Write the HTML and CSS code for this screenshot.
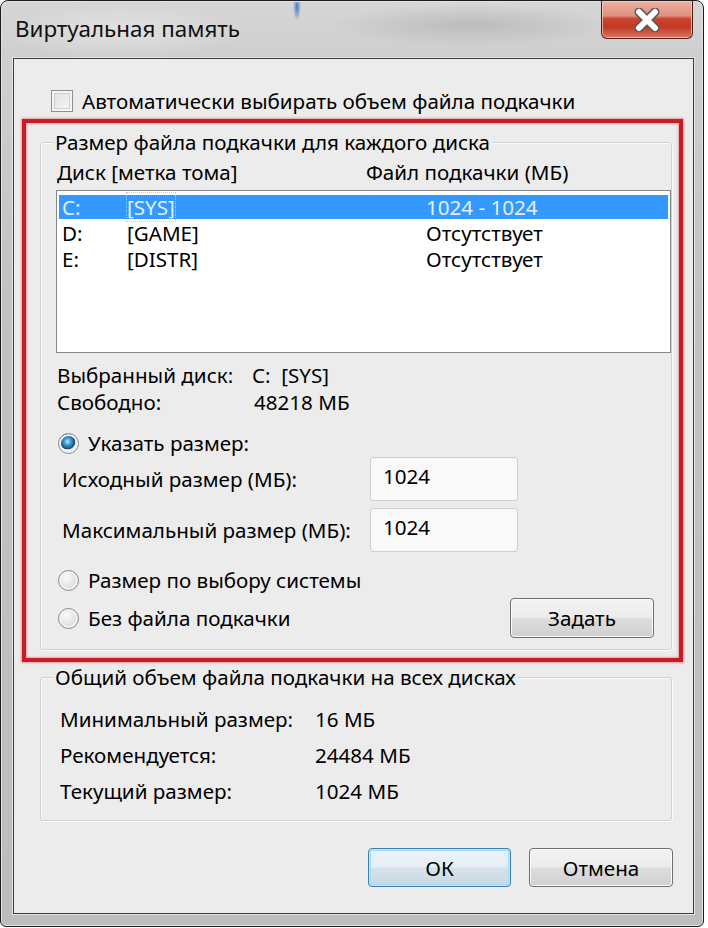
FILE: index.html
```html
<!DOCTYPE html>
<html lang="ru">
<head>
<meta charset="utf-8">
<title>Виртуальная память</title>
<link rel="stylesheet" href="styles.css">
</head>
<body>
<div class="window">
  <div class="titlebar">
    <span class="title">Виртуальная память</span>
    <div class="close">
      <svg width="30" height="24" viewBox="0 0 30 24">
        <path d="M7 4 L23 20 M23 4 L7 20" stroke="#5a5a5a" stroke-width="9" stroke-linecap="round"/>
        <path d="M7 4 L23 20 M23 4 L7 20" stroke="#ffffff" stroke-width="6" stroke-linecap="round"/>
      </svg>
    </div>
  </div>
  <div class="client">
    <div class="auto"><span class="checkbox"></span><span>Автоматически выбирать объем файла подкачки</span></div>
    <div class="highlight">
      <div class="group g1">
        <span class="group-title">Размер файла подкачки для каждого диска</span>
        <div class="cols"><span class="col-a">Диск [метка тома]</span><span>Файл подкачки (МБ)</span></div>
        <div class="listbox">
          <div class="row sel"><span class="c1">C:</span><span class="c2"><span class="focus">[SYS]</span></span><span>1024 - 1024</span></div>
          <div class="row"><span class="c1">D:</span><span class="c2">[GAME]</span><span>Отсутствует</span></div>
          <div class="row"><span class="c1">E:</span><span class="c2">[DISTR]</span><span>Отсутствует</span></div>
        </div>
        <div class="info">
          <span>Выбранный диск:</span><span>C:&nbsp;&nbsp;[SYS]</span>
          <span>Свободно:</span><span class="free">48218 МБ</span>
        </div>
        <div class="radio-row r1"><span class="radio on"></span><span>Указать размер:</span></div>
        <div class="field f1"><span class="field-label">Исходный размер (МБ):</span><span class="input">1024</span></div>
        <div class="field f2"><span class="field-label">Максимальный размер (МБ):</span><span class="input">1024</span></div>
        <div class="radio-row r2"><span class="radio"></span><span>Размер по выбору системы</span></div>
        <div class="last-row">
          <div class="radio-row"><span class="radio"></span><span>Без файла подкачки</span></div>
          <span class="btn set">Задать</span>
        </div>
      </div>
    </div>
    <div class="group g2">
      <span class="group-title">Общий объем файла подкачки на всех дисках</span>
      <div class="totals">
        <span>Минимальный размер:</span><span>16 МБ</span>
        <span>Рекомендуется:</span><span>24484 МБ</span>
        <span>Текущий размер:</span><span>1024 МБ</span>
      </div>
    </div>
    <div class="buttons">
      <span class="btn ok">ОК</span>
      <span class="btn cancel">Отмена</span>
    </div>
  </div>
</div>
</body>
</html>
```
FILE: styles.css
```css
* { box-sizing: border-box; }
html, body { margin: 0; padding: 0; background: #ffffff; }
body {
  font-family: "Noto Sans", "Open Sans", "DejaVu Sans", sans-serif;
  font-size: 20.6px;
  color: #000;
}

.window {
  width: 704px;
  height: 927px;
  border: 1px solid #1c1c1c;
  border-radius: 8px 8px 6px 6px;
  background:
    radial-gradient(ellipse 4px 14px at 296px 6px, rgba(60,110,190,0.9), rgba(60,110,190,0) 100%),
    radial-gradient(ellipse 180px 40px at 120px 30px, rgba(255,255,255,0.35), rgba(255,255,255,0) 70%),
    radial-gradient(ellipse 200px 30px at 470px 24px, rgba(120,120,120,0.25), rgba(120,120,120,0) 70%),
    linear-gradient(180deg, #d6d6d6 0, #cfcfcf 50px, #c2c2c2 300px, #bdbdbd 100%);
  box-shadow: inset 0 0 0 1px #e2e2e2;
  padding: 0 9px 12px 12px;
  display: flex;
  flex-direction: column;
}

.titlebar {
  height: 57px;
  display: flex;
  justify-content: space-between;
  align-items: flex-start;
}
.title {
  font-size: 22.4px;
  line-height: 28px;
  padding: 14px 0 0 2px;
  color: #111;
}
.close {
  width: 92px;
  height: 38px;
  margin-right: 1px;
  border: 1px solid #4a1e18;
  border-top: none;
  border-radius: 0 0 6px 6px;
  background: linear-gradient(180deg, #ecb1a4 0%, #e0907e 40%, #c9442e 48%, #c13a24 70%, #dc7560 100%);
  box-shadow: inset 0 0 0 1px rgba(255,210,200,0.7);
  display: flex;
  align-items: center;
  justify-content: center;
}

.client {
  height: 856px;
  border: 1px solid #3c3c3c;
  background: #ececec;
  box-shadow: 0 0 0 1px #e6e6e6;
  display: flex;
  flex-direction: column;
}

.auto {
  margin-top: 30px;
  height: 24px;
  padding-left: 37px;
  display: flex;
  align-items: center;
  line-height: 24px;
}
.checkbox {
  width: 22px;
  height: 22px;
  margin-right: 9px;
  border: 1px solid #8e8f8f;
  background: linear-gradient(135deg, #dedede, #f8f8f8);
  box-shadow: inset 0 0 0 2px #f4f4f4, inset 0 0 0 3px #cfcfcf;
}

.highlight {
  margin: 6px 10px 0 8px;
  border: 4px solid #c61c2a;
  box-shadow: 0 0 2px 1px rgba(240,120,120,0.7), inset 0 0 2px 1px rgba(240,130,130,0.7);
  padding: 19px 7px 8px 14px;
}

.group {
  border: 1px solid #cdd2d6;
  border-radius: 3px;
  box-shadow: inset 1px 1px 0 #fafafa, 1px 1px 0 #fafafa;
}
.group-title {
  display: block;
  width: max-content;
  margin: -12px 0 0 12px;
  padding: 0 2px;
  background: #ececec;
  line-height: 22px;
}

.g1 { padding: 0 0 11px 0; }

.cols {
  display: flex;
  margin-top: 7px;
  padding-left: 16px;
  line-height: 24px;
}
.col-a { width: 309px; }

.listbox {
  margin: 6px 0 0 15px;
  height: 163px;
  border: 1px solid #828790;
  background: #ffffff;
  padding: 4px 2px 0 2px;
}
.row {
  display: flex;
  height: 24px;
  line-height: 24px;
  margin-bottom: 2px;
  padding-left: 3px;
}
.row.sel { background: #3399ff; color: #e4f0ff; }
.c1 { width: 65px; }
.c2 { width: 299px; }
.focus { outline: 1px dotted #9fd0ff; outline-offset: 0; }

.info {
  display: grid;
  grid-template-columns: 195px auto;
  margin-top: 9px;
  padding-left: 16px;
  line-height: 27px;
}
.free { padding-left: 2px; }

.radio-row {
  display: flex;
  align-items: center;
  height: 24px;
  line-height: 24px;
}
.g1 > .radio-row { padding-left: 17px; }
.r1 { margin-top: 15px; }
.r2 { margin-top: 16px; }
.radio {
  flex: none;
  width: 21px;
  height: 21px;
  margin-right: 9px;
  border-radius: 50%;
  border: 1px solid #8a8a8a;
  background: radial-gradient(circle at 40% 35%, #fafafa 0, #e2e2e2 55%, #c8c8c8 100%);
  box-shadow: inset 0 0 0 2px #f2f2f2;
}
.radio.on {
  background:
    radial-gradient(circle at 45% 40%, #bfe6ff 0, #3f9ad6 22%, #1d5e94 42%, #2a3f55 48%, rgba(0,0,0,0) 52%),
    radial-gradient(circle, #f6f6f6 0, #e6e6e6 100%);
}

.field {
  display: flex;
  align-items: center;
  padding-left: 21px;
}
.f1 { margin-top: 2px; }
.f2 { margin-top: 7px; }
.field-label { width: 308px; }
.input {
  width: 148px;
  height: 44px;
  border: 1px solid #cfcfcf;
  border-radius: 3px;
  background: #f9f9f9;
  padding: 5px 0 0 12px;
  line-height: 26px;
}

.last-row {
  margin-top: 6px;
  padding-left: 17px;
  display: flex;
  align-items: center;
  justify-content: space-between;
}

.btn {
  display: flex;
  align-items: center;
  justify-content: center;
  height: 40px;
  border: 1px solid #6f6f6f;
  border-radius: 4px;
  background: linear-gradient(180deg, #f3f3f3 0%, #ececec 48%, #dddddd 52%, #d0d0d0 100%);
  box-shadow: inset 0 0 0 1px #fbfbfb;
}
.set { width: 144px; margin-right: 17px; }

.g2 {
  margin: 15px 21px 0 26px;
  padding: 0 0 11px 0;
}
.totals {
  display: grid;
  grid-template-columns: 255px auto;
  margin-top: 13px;
  padding-left: 19px;
  line-height: 36px;
}

.buttons {
  margin-top: 27px;
  padding-right: 20px;
  display: flex;
  justify-content: flex-end;
  gap: 18px;
}
.buttons .btn { height: 39px; }
.ok {
  width: 143px;
  border-color: #3c7fb1;
  background: linear-gradient(180deg, #eef4f8 0%, #e6eef4 48%, #d6e2ea 52%, #c9d8e2 100%);
  box-shadow: inset 0 0 0 1px #bfe8fb, inset 0 0 0 2px #a6dbf3;
}
.cancel { width: 144px; }
```
